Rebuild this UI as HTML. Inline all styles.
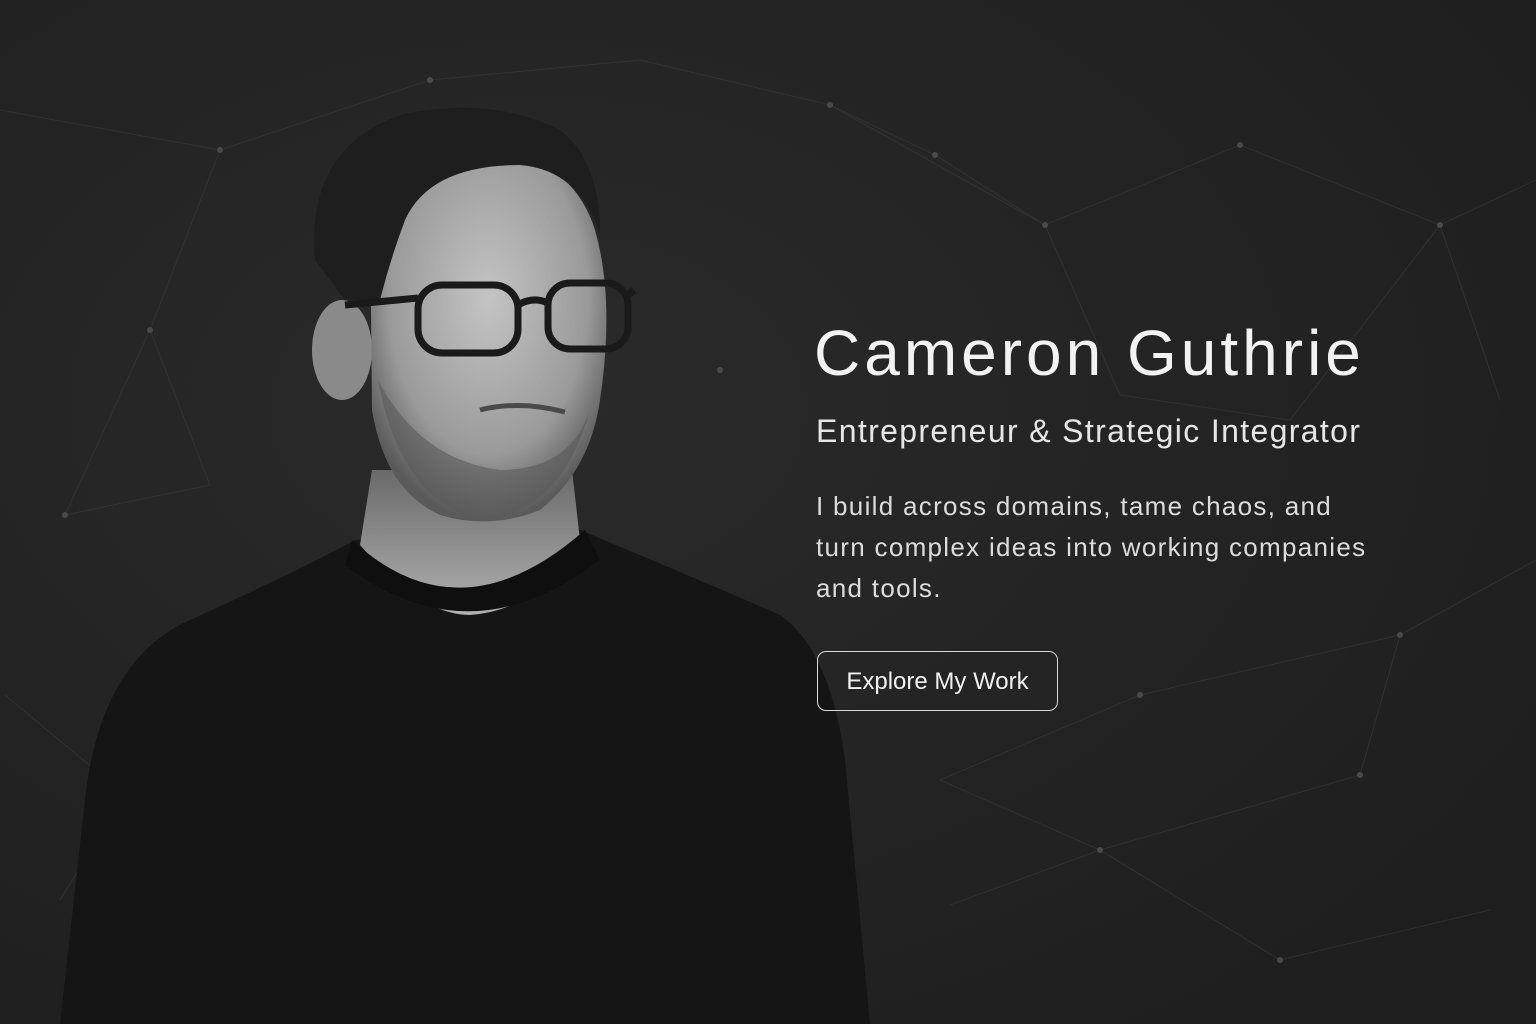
<!DOCTYPE html>
<html><head><meta charset="utf-8"><style>
html,body{margin:0;padding:0}
body{width:1536px;height:1024px;overflow:hidden;background:#232323;font-family:"Liberation Sans",sans-serif;position:relative}
svg{position:absolute;left:0;top:0}
.t{position:absolute;left:816px;color:#f0f0f0}
h1{position:absolute;left:814px;top:316px;margin:0;font-weight:400;font-size:64px;color:#f2f2f2;letter-spacing:4px}
.sub{top:413px;font-size:32px;color:#e6e6e6;letter-spacing:1.35px}
.p{top:486px;font-size:26px;line-height:41px;color:#dcdcdc;width:640px;letter-spacing:1.3px;white-space:nowrap}
.btn{position:absolute;left:817px;top:651px;width:241px;height:60px;border:1.5px solid #d8d8d8;border-radius:9px;box-sizing:border-box;color:#f0f0f0;font-size:24px;text-align:center;line-height:60px}
</style></head><body>
<svg width="1536" height="1024" viewBox="0 0 1536 1024">
<defs>
<radialGradient id="bg" cx="0.35" cy="0.4" r="0.8"><stop offset="0" stop-color="#2a2a2a"/><stop offset="1" stop-color="#1e1e1e"/></radialGradient>
<radialGradient id="face" cx="0.5" cy="0.4" r="0.6"><stop offset="0" stop-color="#c4c4c4"/><stop offset="0.7" stop-color="#9a9a9a"/><stop offset="1" stop-color="#5a5a5a"/></radialGradient>
<linearGradient id="neck" x1="0" y1="0" x2="0" y2="1"><stop offset="0" stop-color="#6a6a6a"/><stop offset="1" stop-color="#b0b0b0"/></linearGradient>
</defs>
<rect width="1536" height="1024" fill="url(#bg)"/>
<g stroke="#3a3a3a" stroke-width="1" fill="none" opacity="0.6">
<path d="M0 110 L220 150 L430 80 L640 60 L830 105 L1045 225 L1240 145 L1440 225 L1536 180"/>
<path d="M220 150 L150 330 L65 515 L210 485 L150 330"/>
<path d="M1045 225 L935 155 L830 105 M1045 225 L1120 395 L1290 420 L1440 225 L1500 400"/>
<path d="M1140 695 L1400 635 L1536 560"/>
<path d="M1140 695 L940 780 L1100 850 L1360 775 L1400 635"/>
<path d="M950 905 L1100 850 L1280 960 L1490 910"/>
<path d="M5 695 L125 795 L215 885 L340 965 M125 795 L60 900"/>
</g>
<g fill="#4a4a4a">
<circle cx="430" cy="80" r="3"/><circle cx="220" cy="150" r="3"/><circle cx="1045" cy="225" r="3"/><circle cx="1240" cy="145" r="3"/><circle cx="1440" cy="225" r="3"/><circle cx="830" cy="105" r="3"/><circle cx="935" cy="155" r="3"/><circle cx="720" cy="370" r="3"/><circle cx="1140" cy="695" r="3"/><circle cx="1400" cy="635" r="3"/><circle cx="65" cy="515" r="3"/><circle cx="125" cy="795" r="3"/><circle cx="215" cy="885" r="3"/><circle cx="1360" cy="775" r="3"/><circle cx="1100" cy="850" r="3"/><circle cx="1280" cy="960" r="3"/><circle cx="150" cy="330" r="3"/>
</g>
<path d="M60 1024 L85 800 Q100 660 190 620 Q300 570 355 540 L580 530 Q700 580 780 615 Q830 650 845 760 L870 1024 Z" fill="#151515"/>
<path d="M372 470 L360 545 Q420 615 470 615 Q540 610 580 540 L572 470 Z" fill="url(#neck)"/>
<path d="M352 540 Q460 640 585 530 L600 560 Q470 660 345 565 Z" fill="#0f0f0f"/>
<ellipse cx="342" cy="350" rx="30" ry="50" fill="#8a8a8a"/>
<path d="M370 210 Q380 150 470 150 Q570 150 595 230 Q615 300 600 400 Q590 470 540 510 Q490 530 440 515 Q385 490 372 410 Z" fill="url(#face)"/>
<path d="M378 380 Q400 500 480 520 Q560 515 590 410 Q570 470 500 470 Q420 460 378 380Z" fill="#5a5a5a" opacity="0.6"/>
<path d="M315 260 Q305 150 400 115 Q490 95 560 130 Q600 160 600 235 Q580 170 520 165 Q430 165 405 220 Q390 260 380 300 L345 300 Z" fill="#1e1e1e"/>
<g fill="none" stroke="#1a1a1a" stroke-width="7">
<rect x="418" y="285" width="100" height="68" rx="24"/>
<rect x="548" y="283" width="80" height="66" rx="22"/>
<path d="M518 305 Q533 296 548 303 M418 298 L345 305 M628 295 L634 290"/>
</g>
<path d="M480 410 Q520 400 565 412" stroke="#4a4a4a" stroke-width="5" fill="none"/>
</svg>
<h1>Cameron Guthrie</h1>
<div class="t sub">Entrepreneur &amp; Strategic Integrator</div>
<div class="t p">I build across domains, tame chaos, and<br>turn complex ideas into working companies<br>and tools.</div>
<div class="btn">Explore My Work</div>
</body></html>
